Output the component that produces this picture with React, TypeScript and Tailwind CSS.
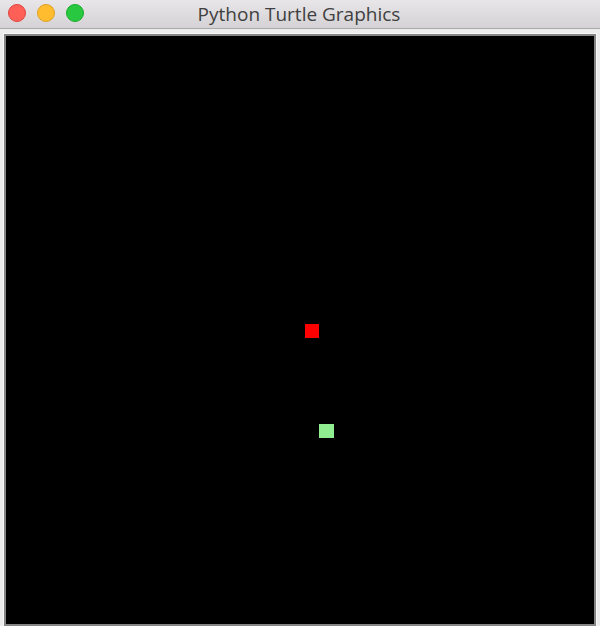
export default function App() {
    return (
        <div className="w-[600px] h-[626px] flex flex-col bg-[#ececec] overflow-hidden">
            {/* title bar */}
            <div className="relative h-[29px] shrink-0 bg-gradient-to-b from-[#e8e6e8] to-[#d4d2d4] border-b border-[#a9a9a9] flex items-center justify-center">
                <div className="absolute left-[8px] top-[4px] flex gap-[11px]">
                    <span className="w-[18px] h-[18px] rounded-full bg-[#fe5f57] border border-[#e0443e]" />
                    <span className="w-[18px] h-[18px] rounded-full bg-[#febc2e] border border-[#dea123]" />
                    <span className="w-[18px] h-[18px] rounded-full bg-[#28c840] border border-[#1aab29]" />
                </div>
                <h1 className="text-[19px] text-[#404040] font-['Open_Sans',sans-serif] leading-none -translate-x-[1px]">
                    Python Turtle Graphics
                </h1>
            </div>

            {/* window body */}
            <div className="flex-1 px-[3px] pt-[4px] flex">
                <div className="flex-1 flex border border-[#f7f7f7] border-b-0">
                    <div className="flex-1 border-2 border-[#858585]">
                        <div className="relative w-full h-full bg-black">
                            <div className="absolute left-[299px] top-[288px] w-[14px] h-[14px] bg-[#ff0000]" />
                            <div className="absolute left-[313px] top-[388px] w-[15px] h-[14px] bg-[#90ee90]" />
                        </div>
                    </div>
                </div>
            </div>
        </div>
    )
}
